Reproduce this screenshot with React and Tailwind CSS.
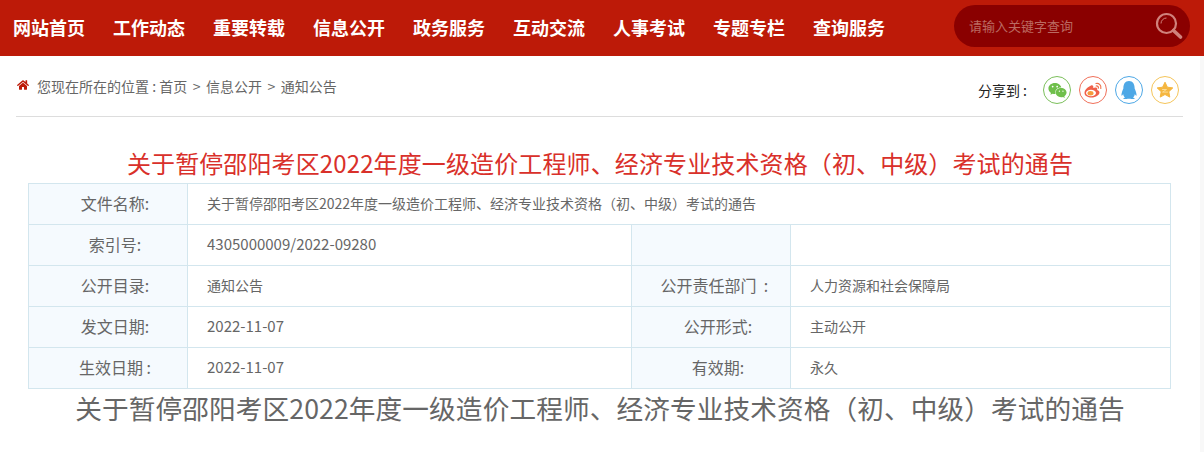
import React from 'react';
import { FaWeixin, FaQq, FaHome } from 'react-icons/fa';

const font = { fontFamily: '"Noto Sans CJK SC", "Liberation Sans", sans-serif' };

const navItems = ['网站首页', '工作动态', '重要转载', '信息公开', '政务服务', '互动交流', '人事考试', '专题专栏', '查询服务'];

const title = '关于暂停邵阳考区2022年度一级造价工程师、经济专业技术资格（初、中级）考试的通告';

const Label = ({ children }) => (
  <td className="border border-[#d3e6ee] bg-[#f5fafe] pb-[2px] pl-[14px] text-center text-[16px] text-[#666]">{children}</td>
);

const Value = ({ children, colSpan, num }) => (
  <td colSpan={colSpan} className={`border border-[#d3e6ee] pb-[2px] pl-[19px] text-[#666] ${num ? 'text-[15px]' : 'text-[14px]'}`}>{children}</td>
);

const shareBtnClass = 'w-7 h-7 rounded-full border flex items-center justify-center';

const WeiboIcon = () => (
  <svg width="20" height="20" viewBox="0 0 20 20" fill="none">
    <path d="M8 5.5C4.5 7 1.5 10 1.5 13c0 2.8 3.4 4.5 7 4.5 4.6 0 8-2.7 8-5 0-1.6-1.5-2.2-2.4-2.5.5-1.3.2-2.5-1.4-2.6-1 0-2 .4-2.4.6.3-1.6-.4-3.3-2.3-2.5z" fill="#f0604a" />
    <ellipse cx="8" cy="13" rx="5" ry="3.3" fill="#fff" />
    <ellipse cx="7.5" cy="13.2" rx="3" ry="2.2" fill="#f59a3c" />
    <path d="M13 3.5a4 4 0 0 1 4.8 5M13.2 6a1.8 1.8 0 0 1 2.2 2.2" stroke="#f0704a" strokeWidth="1.2" strokeLinecap="round" />
  </svg>
);

const StarIcon = () => (
  <svg width="18" height="18" viewBox="0 0 18 18" fill="none">
    <path d="M9 1.2l2.4 5 5.4.7-4 3.8 1 5.4L9 13.5l-4.8 2.6 1-5.4-4-3.8 5.4-.7z" fill="#f5b63f" stroke="#f5b63f" strokeLinejoin="round" />
    <path d="M6.5 8.5h4l-4 2.6h5" stroke="#fbdc94" strokeWidth="1" strokeLinecap="round" strokeLinejoin="round" />
  </svg>
);

const App = () => {
  return (
    <div style={font} className="flex min-h-screen w-[1204px] flex-col overflow-hidden bg-[#f8f8f8]">
      <div className="flex h-14 items-center bg-[#bd1a08] pl-[13px] pr-[14px]">
        <ul className="flex flex-1 gap-7 pb-[2px]">
          {navItems.map((item) => (
            <li key={item} className="text-[18px] font-bold leading-none text-white">{item}</li>
          ))}
        </ul>
        <div className="mb-[4px] flex h-[42px] w-[236px] items-center justify-between rounded-full bg-[#8a0000] pl-[15px] pr-[7px]">
          <span className="pb-[1px] text-[13px] text-[#bb6a62]">请输入关键字查询</span>
          <svg width="28" height="28" viewBox="0 0 28 28" fill="none" className="text-[#d0827c]">
            <circle cx="11.5" cy="11.5" r="9.5" stroke="currentColor" strokeWidth="2.2" />
            <path d="M6 11.5a5.5 5.5 0 0 1 5.5-5.5" stroke="currentColor" strokeWidth="1" />
            <path d="M18.5 18.5l7 6.5" stroke="currentColor" strokeWidth="3.6" strokeLinecap="round" />
          </svg>
        </div>
      </div>

      <div className="w-[1200px] flex-1 bg-white">
        <div className="mx-4 flex h-[61px] w-[1167px] items-center justify-between border-b border-[#dddddd] pr-1">
          <div className="flex items-center text-[14px] text-[#666]">
            <FaHome className="ml-px mr-2 mt-[-2px] h-3 w-3 text-[#bd1a08]" />
            <span>您现在所在的位置 : 首页</span>
            <span className="mx-[5.5px]">&gt;</span>
            <span>信息公开</span>
            <span className="mx-[5.5px]">&gt;</span>
            <span>通知公告</span>
          </div>
          <div className="mt-2 flex items-center">
            <span className="mr-4 text-[14px] text-[#222]">分享到 :</span>
            <div className="flex gap-2">
              <div className={`${shareBtnClass} border-[#7cc05c]`}><FaWeixin className="h-[19px] w-[19px] text-[#6fbf4b]" /></div>
              <div className={`${shareBtnClass} border-[#f0705a]`}><WeiboIcon /></div>
              <div className={`${shareBtnClass} border-[#4ea8e6]`}><FaQq className="h-[18px] w-[18px] text-[#4ea8e6]" /></div>
              <div className={`${shareBtnClass} border-[#f5c55a]`}><StarIcon /></div>
            </div>
          </div>
        </div>

        <h1 className="mb-[3px] mt-[28px] text-center text-[24px] font-normal leading-[35px] tracking-[0.12px] text-[#d9302a]">{title}</h1>

        <table className="ml-7 w-[1143px] table-fixed border-collapse">
          <colgroup>
            <col className="w-[159px]" />
            <col className="w-[444px]" />
            <col className="w-[159px]" />
            <col />
          </colgroup>
          <tbody>
            <tr className="h-[41px]">
              <Label>文件名称:</Label>
              <Value colSpan={3}>{title}</Value>
            </tr>
            <tr className="h-[41px]">
              <Label>索引号:</Label>
              <Value num>4305000009/2022-09280</Value>
              <Label></Label>
              <Value></Value>
            </tr>
            <tr className="h-[41px]">
              <Label>公开目录:</Label>
              <Value>通知公告</Value>
              <Label>公开责任部门 &nbsp;:&nbsp;&nbsp;</Label>
              <Value>人力资源和社会保障局</Value>
            </tr>
            <tr className="h-[41px]">
              <Label>发文日期:</Label>
              <Value num>2022-11-07</Value>
              <Label>公开形式:</Label>
              <Value>主动公开</Value>
            </tr>
            <tr className="h-[41px]">
              <Label>生效日期 :</Label>
              <Value num>2022-11-07</Value>
              <Label>有效期:</Label>
              <Value>永久</Value>
            </tr>
          </tbody>
        </table>

        <p className="text-center text-[26.67px] leading-[38px] tracking-[0.1px] text-[#666]">{title}</p>
      </div>
    </div>
  );
};

export default App;
